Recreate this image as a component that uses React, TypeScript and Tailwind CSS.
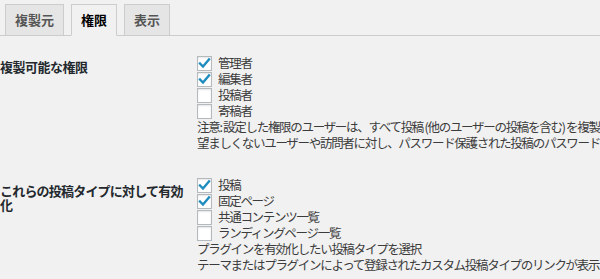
import React from "react";

const font = "[font-family:'Noto_Sans_CJK_JP','Noto_Sans',sans-serif]";

function Check({ checked, label }: { checked: boolean; label: string }) {
  return (
    <div className="flex items-center h-[16px]">
      <span className="relative w-[15px] h-[15px] bg-white border border-[#b4b9be] shadow-[inset_0_1px_2px_rgba(0,0,0,0.1)] shrink-0">
        {checked && (
          <svg viewBox="0 0 15 15" className="absolute left-[-1px] top-[-1px] w-[15px] h-[15px]">
            <path d="M3 7.5 L6 10.5 L12 3.5" fill="none" stroke="#1e8cbe" strokeWidth="2.4" strokeLinecap="square" strokeLinejoin="miter" />
          </svg>
        )}
      </span>
      <span className="ml-[6px] text-[#3c3c3c]">{label}</span>
    </div>
  );
}

function Tab({ label, active }: { label: string; active?: boolean }) {
  return (
    <div
      className={
        "h-[32px] px-[9px] border border-[#ccc] text-[13px] leading-[30px] font-semibold tracking-normal -mb-px " +
        (active ? "bg-[#f1f1f1] border-b-[#f1f1f1] text-[#000]" : "bg-[#e5e5e5] text-[#555]")
      }
    >
      {label}
    </div>
  );
}

export default function App() {
  return (
    <div className={"w-[600px] h-[279px] bg-[#f1f1f1] overflow-hidden text-[12.5px] leading-[16px] tracking-[-1.3px] " + font}>
      <div className="pt-[4px] border-b border-[#ccc] flex items-end gap-[7px] pl-[5px] h-[36px]">
        <Tab label="複製元" />
        <Tab label="権限" active />
        <Tab label="表示" />
      </div>

      <div className="flex pt-[19px]">
        <div className="w-[197px] shrink-0 pt-[4px] text-[13px] tracking-[-0.5px] font-semibold text-[#23282d]">複製可能な権限</div>
        <div className="flex flex-col whitespace-nowrap">
          <Check checked label="管理者" />
          <Check checked label="編集者" />
          <Check checked={false} label="投稿者" />
          <Check checked={false} label="寄稿者" />
          <div className="text-[#3c3c3c]">注意: 設定した権限のユーザーは、すべて投稿 (他のユーザーの投稿を含む) を複製できます。</div>
          <div className="text-[#3c3c3c]">望ましくないユーザーや訪問者に対し、パスワード保護された投稿のパスワードとコンテンツが公開される可能性があります。</div>
        </div>
      </div>

      <div className="flex pt-[26px]">
        <div className="w-[197px] shrink-0 pt-[7px] leading-[14px] text-[13px] tracking-[-0.8px] font-semibold text-[#23282d]">
          これらの投稿タイプに対して有効
          <br />化
        </div>
        <div className="flex flex-col whitespace-nowrap">
          <Check checked label="投稿" />
          <Check checked label="固定ページ" />
          <Check checked={false} label="共通コンテンツ一覧" />
          <Check checked={false} label="ランディングページ一覧" />
          <div className="text-[#3c3c3c]">プラグインを有効化したい投稿タイプを選択</div>
          <div className="text-[#3c3c3c]">テーマまたはプラグインによって登録されたカスタム投稿タイプのリンクが表示されるかどうかは、そのテーマやプラグインによります。</div>
        </div>
      </div>
    </div>
  );
}
